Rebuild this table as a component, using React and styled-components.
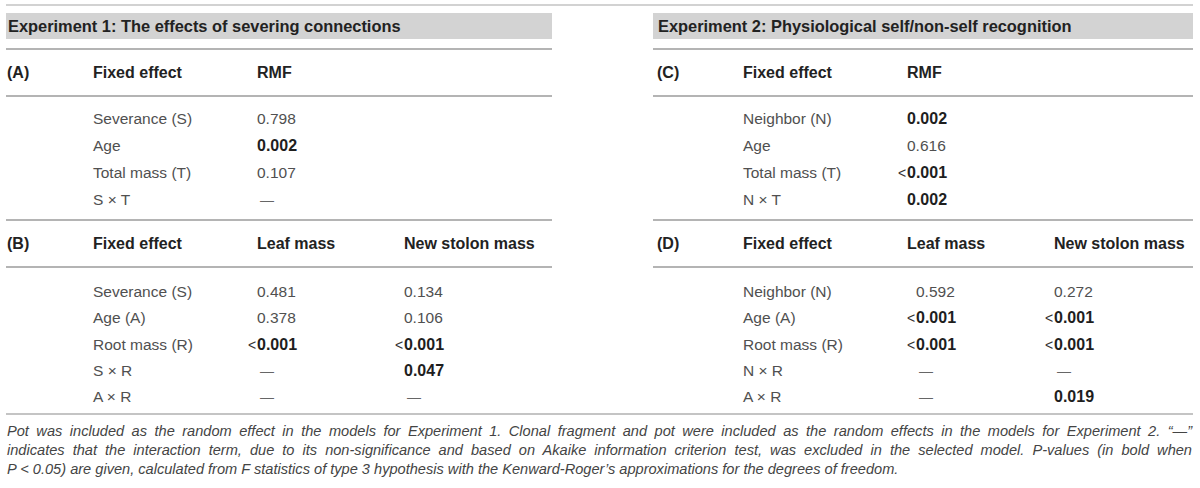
import React from 'react'
import styled, { createGlobalStyle } from 'styled-components'

const Global = createGlobalStyle`
    body {
        margin: 0;
        background: #fff;
        font-family: 'Liberation Sans', Arial, sans-serif;
        color: #505050;
    }
`

const panels = [
    {
        title: 'Experiment 1: The effects of severing connections',
        pad: 1,
        sections: [
            {
                label: '(A)',
                heads: ['Fixed effect', 'RMF'],
                shift: [0, 0],
                rows: [
                    ['Severance (S)', '0.798'],
                    ['Age', '*0.002'],
                    ['Total mass (T)', '0.107'],
                    ['S × T', '—'],
                ],
            },
            {
                label: '(B)',
                heads: ['Fixed effect', 'Leaf mass', 'New stolon mass'],
                shift: [0, 0],
                rows: [
                    ['Severance (S)', '0.481', '0.134'],
                    ['Age (A)', '0.378', '0.106'],
                    ['Root mass (R)', '*<0.001', '*<0.001'],
                    ['S × R', '—', '*0.047'],
                    ['A × R', '—', '—'],
                ],
            },
        ],
    },
    {
        title: 'Experiment 2: Physiological self/non-self recognition',
        pad: 4,
        sections: [
            {
                label: '(C)',
                heads: ['Fixed effect', 'RMF'],
                shift: [0, 0],
                rows: [
                    ['Neighbor (N)', '*0.002'],
                    ['Age', '0.616'],
                    ['Total mass (T)', '*<0.001'],
                    ['N × T', '*0.002'],
                ],
            },
            {
                label: '(D)',
                heads: ['Fixed effect', 'Leaf mass', 'New stolon mass'],
                shift: [9, 0],
                rows: [
                    ['Neighbor (N)', '0.592', '0.272'],
                    ['Age (A)', '*<0.001', '*<0.001'],
                    ['Root mass (R)', '*<0.001', '*<0.001'],
                    ['N × R', '—', '—'],
                    ['A × R', '—', '*0.019'],
                ],
            },
        ],
    },
]

const note = [
    'Pot was included as the random effect in the models for Experiment 1. Clonal fragment and pot were included as the random effects in the models for Experiment 2. “—”',
    'indicates that the interaction term, due to its non-significance and based on Akaike information criterion test, was excluded in the selected model. P-values (in bold when',
    'P < 0.05) are given, calculated from F statistics of type 3 hypothesis with the Kenward-Roger’s approximations for the degrees of freedom.',
]

const Value = ({ text, shift }) => {
    const bold = text.startsWith('*')
    const raw = bold ? text.slice(1) : text
    if (raw === '—') return <Dash $shift={shift}>—</Dash>
    const lt = raw.startsWith('<')
    return (
        <Num $bold={bold} $shift={shift}>
            {lt && <Lt>&lt;</Lt>}
            {lt ? raw.slice(1) : raw}
        </Num>
    )
}

const App = () => {
    return (
        <Page>
            <Global />
            <Rule />
            <Panels>
                {panels.map((p, i) => (
                    <Panel key={i} $width={i === 0 ? 546 : 540}>
                        <Title $pad={p.pad}>{p.title}</Title>
                        {p.sections.map((s, j) => (
                            <div key={j}>
                                <Head $pad={p.pad} $first={j === 0}>
                                    <span>{s.label}</span>
                                    {s.heads.map((h) => <span key={h}>{h}</span>)}
                                </Head>
                                <Rows $first={j === 0}>
                                    {s.rows.map((r) => (
                                        <Row key={r[0]} $pad={p.pad} $h={j === 0 ? 27 : 26.25}>
                                            <span />
                                            <Name>{r[0]}</Name>
                                            {r.slice(1).map((v, k) => (
                                                <Value key={k} text={v} shift={s.shift[k]} />
                                            ))}
                                        </Row>
                                    ))}
                                </Rows>
                            </div>
                        ))}
                    </Panel>
                ))}
            </Panels>
            <Rule $dark />
            <Note>
                {note.map((line, i) => (
                    <NoteLine key={i} $last={i === note.length - 1}>{line}</NoteLine>
                ))}
            </Note>
        </Page>
    )
}

const Page = styled.div`
    width: 1187px;
    padding: 4px 0 0 6px;
`
const Rule = styled.div`
    height: 2px;
    background: ${(p) => (p.$dark ? '#c4c4c4' : '#d2d2d2')};
`
const Panels = styled.div`
    display: flex;
    justify-content: space-between;
`
const Panel = styled.section`
    width: ${(p) => p.$width}px;
`
const Title = styled.h2`
    margin: 7px 0 0;
    height: 26px;
    line-height: 27px;
    padding-left: ${(p) => p.$pad + 1}px;
    background: #d3d3d3;
    font-size: 16.4px;
    font-weight: 700;
    color: #222;
`
const grid = `
    display: grid;
    grid-template-columns: 86px 164px 147px 1fr;
    align-items: center;
`
const Head = styled.div`
    ${grid}
    margin-top: ${(p) => (p.$first ? 9 : 0)}px;
    padding-left: ${(p) => p.$pad}px;
    height: 45px;
    border-top: 2px solid #b4b4b4;
    border-bottom: 2px solid #b4b4b4;
    font-size: 16px;
    font-weight: 700;
    color: #222;
    white-space: nowrap;
`
const Rows = styled.div`
    padding: ${(p) => (p.$first ? '8px 0 6px' : '11px 0 3px')};
`
const Row = styled.div`
    ${grid}
    padding-left: ${(p) => p.$pad}px;
    height: ${(p) => p.$h}px;
    font-size: 15.5px;
    white-space: nowrap;
`
const Name = styled.span`
    color: #505050;
`
const Num = styled.span`
    padding-left: ${(p) => p.$shift}px;
    font-size: ${(p) => (p.$bold ? 16 : 15.5)}px;
    font-weight: ${(p) => (p.$bold ? 700 : 400)};
    color: ${(p) => (p.$bold ? '#1e1e1e' : '#505050')};
`
const Lt = styled.span`
    display: inline-block;
    width: 9px;
    margin-left: -9px;
    font-size: 14px;
    font-weight: 400;
    color: #333;
`
const Dash = styled.span`
    padding-left: ${(p) => p.$shift + 3}px;
    color: #666;
    font-size: 14px;
`
const Note = styled.div`
    padding: 7px 1px 0 1px;
    font-size: 14.6px;
    line-height: 19px;
    font-style: italic;
    color: #444;
`
const NoteLine = styled.p`
    margin: 0;
    white-space: ${(p) => (p.$last ? 'nowrap' : 'normal')};
    text-align: justify;
    text-align-last: ${(p) => (p.$last ? 'left' : 'justify')};
`

export default App
